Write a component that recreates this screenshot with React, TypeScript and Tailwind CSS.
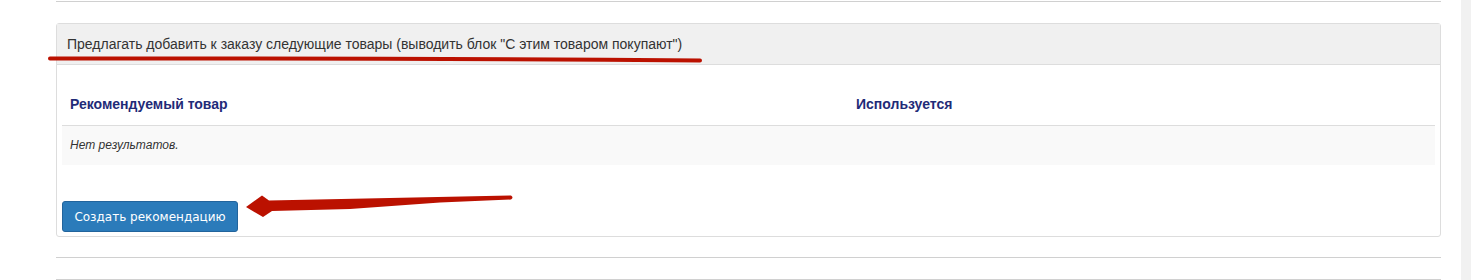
import React from 'react';

export default function App() {
    return (
        <div className="relative flex h-[280px] w-[1471px] overflow-hidden bg-white" style={{ fontFamily: '"Liberation Sans", Arial, sans-serif' }}>
            <div className="flex-1 pl-[56px] pr-[20px] pt-[1px]">
                <div className="border-t border-[#d0d0d0]" />

                <div className="mt-[21px] rounded-[3px] border border-[#dddddd] bg-white">
                    <div className="flex h-[41px] items-center border-b border-[#dddddd] bg-[#f0f0f0] px-[10px] text-[14px] text-[#333333]">
                        Предлагать добавить к заказу следующие товары (выводить блок "С этим товаром покупают")
                    </div>

                    <div className="px-[5px] pb-[4px] pt-[20px]">
                        <table className="w-full border-collapse">
                            <thead>
                                <tr className="border-b border-[#dddddd]">
                                    <th className="h-[40px] w-[786px] px-[8px] text-left text-[14px] font-bold text-[#1f2b78]">Рекомендуемый товар</th>
                                    <th className="h-[40px] px-[8px] text-left text-[14px] font-bold text-[#1f2b78]">Используется</th>
                                </tr>
                            </thead>
                            <tbody>
                                <tr className="bg-[#f9f9f9]">
                                    <td colSpan={2} className="h-[40px] px-[8px] text-[12px] italic text-[#333333]">Нет результатов.</td>
                                </tr>
                            </tbody>
                        </table>

                        <button
                            type="button"
                            className="mt-[36px] block h-[31px] w-[176px] rounded-[3px] border border-[#22649c] bg-[#2b7bba] pt-[1px] text-[12px] text-white"
                            style={{ fontFamily: '"DejaVu Sans", Verdana, sans-serif' }}
                        >
                            Создать рекомендацию
                        </button>
                    </div>
                </div>

                <div className="mt-[20px] border-t border-[#d0d0d0]" />
                <div className="mt-[21px] border-t border-[#d0d0d0]" />
            </div>

            <div className="w-[10px] bg-[#f1f1f1]" />

            {/* annotations drawn over the screenshot */}
            <svg className="pointer-events-none absolute left-0 top-0" width="1471" height="280" viewBox="0 0 1471 280">
                <path d="M50 58.5 Q 380 58 700 60.5" stroke="#bb1100" strokeWidth="4" strokeLinecap="round" fill="none" />
                <path
                    d="M246 207 L262 195.5 L269 200.5 L511 195.5 Q514 197.5 511 199.5 L440 202.5 L350 209 L272 211 L263 217 Z"
                    fill="#bb1100"
                />
            </svg>
        </div>
    );
}
